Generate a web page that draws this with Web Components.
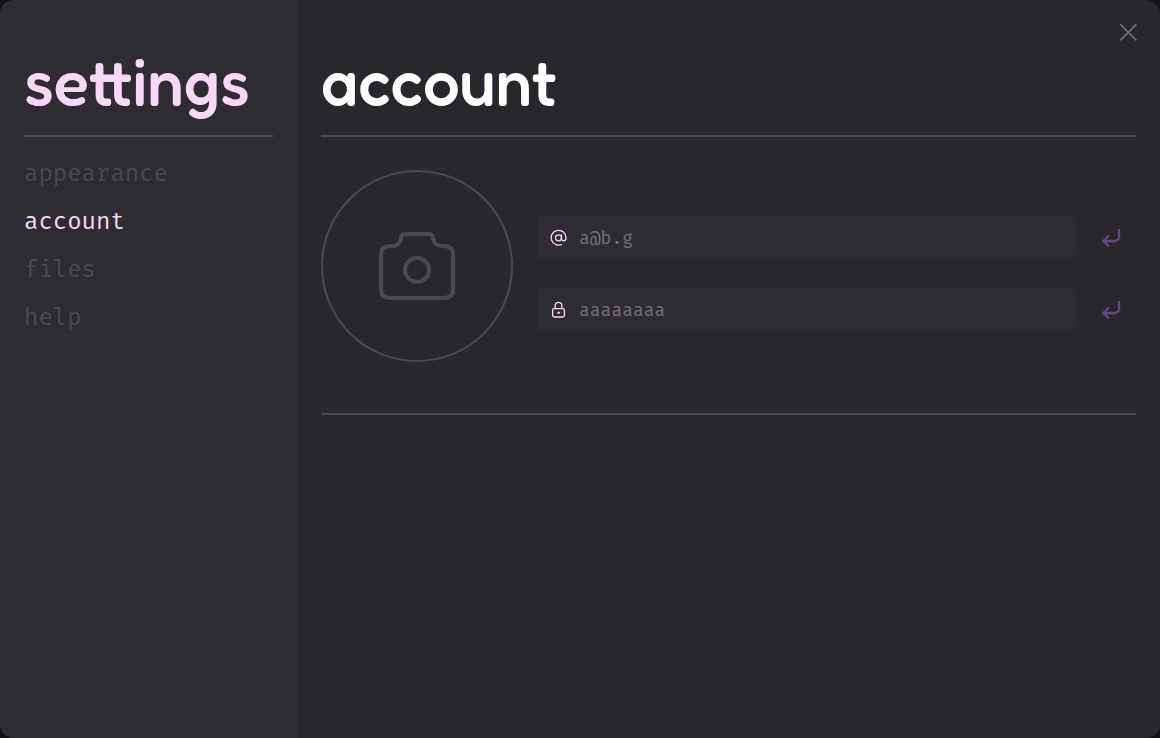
<!DOCTYPE html>
<html lang="en">
<head>
<meta charset="utf-8">
<title>settings</title>
<style>
html { height: 100%; background: #121116; }
body { margin: 0; min-height: 100%; display: grid; font-family: "Fira Mono", "Fira Code", "Liberation Mono", monospace;
  --panel: #2a262d; --raised: #2f2b32; --line: #4b484f; --pink: #f8d8f8; --purple: #604880; }
</style>
</head>
<body>
<settings-window>
  <settings-nav slot="nav" heading="settings">
    <nav-item>appearance</nav-item>
    <nav-item current>account</nav-item>
    <nav-item>files</nav-item>
    <nav-item>help</nav-item>
  </settings-nav>
  <account-page></account-page>
</settings-window>
<script>
const define = (name, html, setup) => customElements.define(name, class extends HTMLElement {
  connectedCallback() {
    if (this.shadowRoot) return;
    const t = document.createElement('template');
    t.innerHTML = html;
    this.attachShadow({ mode: 'open' }).append(t.content.cloneNode(true));
    if (setup) setup(this, this.shadowRoot);
  }
});

define('page-title', `<style>
  :host { display: block; border-bottom: 2px solid var(--line); color: white; }
  h1 { margin: 0; font: 500 65px/67px Fredoka, Quicksand, Inter, sans-serif; padding-bottom: 20px; }
</style><h1><slot></slot></h1>`);

define('nav-item', `<style>
  :host { display: block; }
  a { display: block; font-size: 24px; line-height: 48px; color: var(--line); text-decoration: none; }
  a[aria-current] { color: var(--pink); }
</style><a href="#"><slot></slot></a>`, (el, root) => {
  if (el.hasAttribute('current')) root.querySelector('a').setAttribute('aria-current', 'page');
});

define('settings-nav', `<style>
  :host { display: block; box-sizing: border-box; background: var(--raised); padding: 48px 24px; }
  page-title { color: var(--pink); }
  nav { padding-top: 12px; }
</style><page-title></page-title><nav><slot></slot></nav>`, (el, root) => {
  root.querySelector('page-title').textContent = el.getAttribute('heading');
});

define('settings-window', `<style>
  :host { display: grid; grid-template-columns: 297px minmax(0, 1fr); background: var(--panel); border-radius: 14px; overflow: hidden; position: relative; }
  main { padding: 48px 24px; }
  button { position: absolute; top: 16px; right: 16px; width: 32px; height: 32px; padding: 0; border: 0; background: none; color: #68656c; }
  svg { display: block; width: 32px; height: 32px; }
</style>
<slot name="nav"></slot>
<main><slot></slot></main>
<button aria-label="Close"><svg viewBox="0 0 32 32" fill="none" stroke="currentColor" stroke-width="2"><path d="M8.2 8.2 24.4 24.4M24.4 8.2 8.2 24.4"/></svg></button>`);

define('avatar-picker', `<style>
  :host { display: block; }
  button { display: grid; place-items: center; box-sizing: border-box; width: 192px; height: 192px; border: 2px solid var(--line); border-radius: 50%; background: none; padding: 0; color: var(--line); }
  svg { width: 80px; height: 72px; }
</style><button aria-label="Choose a picture"><svg viewBox="0 0 80 72" fill="none" stroke="currentColor" stroke-width="4"><path d="M28 4H52Q56 4 56 9Q58 16 65 16H67Q76 16 76 25V59Q76 68 67 68H13Q4 68 4 59V25Q4 16 13 16H15Q22 16 24 9Q24 4 28 4Z"/><circle cx="40" cy="40" r="12"/></svg></button>`);

define('account-field', `<style>
  :host { display: block; }
  form { display: flex; align-items: center; margin: 0; }
  label { flex: 1; min-width: 0; display: flex; align-items: center; gap: 12px; height: 43px; padding: 0 13px; box-sizing: border-box; background: var(--raised); border-radius: 5px; color: var(--pink); }
  input { flex: 1; min-width: 0; height: 43px; border: 0; padding: 0; background: none; outline: 0; color: var(--pink); font: 400 18px/24px "Fira Mono", "Fira Code", "Liberation Mono", monospace; }
  input::placeholder { color: #717073; opacity: 1; }
  button { width: 60px; height: 43px; padding: 0 0 0 10px; border: 0; background: none; display: grid; place-items: center; color: var(--purple); }
  button svg { display: block; width: 20px; height: 20px; }
</style>
<form><label><slot name="icon"></slot><input></label>
<button type="submit" aria-label="Save"><svg viewBox="0 0 20 20" fill="none" stroke="currentColor" stroke-width="2.4"><path d="M18 1V9Q18 13 14 13H3M8 7.4 2.4 13 8 18.4"/></svg></button></form>`, (el, root) => {
  const input = root.querySelector('input');
  input.placeholder = el.getAttribute('hint');
  input.setAttribute('aria-label', el.getAttribute('name'));
});

define('account-page', `<style>
  :host { display: block; }
  .profile { display: flex; align-items: center; gap: 24px; padding: 33px 0 51px; border-bottom: 2px solid var(--line); }
  .fields { flex: 1; min-width: 0; display: grid; gap: 29px; padding-top: 15px; }
  svg { width: 17px; height: 18px; flex: none; color: var(--pink); }
</style>
<page-title>account</page-title>
<section class="profile"><avatar-picker></avatar-picker>
<div class="fields">
  <account-field name="email" hint="a@b.g"><svg slot="icon" viewBox="0 0 17 18" fill="none" stroke="currentColor" stroke-width="1.3"><circle cx="8.5" cy="8.8" r="3"/><path d="M11.5 5.6V9.8Q11.7 11.9 13.7 11.9Q16 11.9 16 8.8A7.4 7.4 0 1 0 12.2 15.2"/></svg></account-field>
  <account-field name="password" hint="aaaaaaaa"><svg slot="icon" viewBox="0 0 17 18" fill="none" stroke="currentColor" stroke-width="1.3"><rect x="2.6" y="7.6" width="11.8" height="8.4" rx="1.8"/><path d="M5.1 7.6V4.8A3.4 3.4 0 0 1 11.9 4.8V7.6"/><rect x="7.8" y="11" width="1.6" height="1.6" fill="currentColor" stroke-width=".6"/></svg></account-field>
</div></section>`);
</script>
</body>
</html>
